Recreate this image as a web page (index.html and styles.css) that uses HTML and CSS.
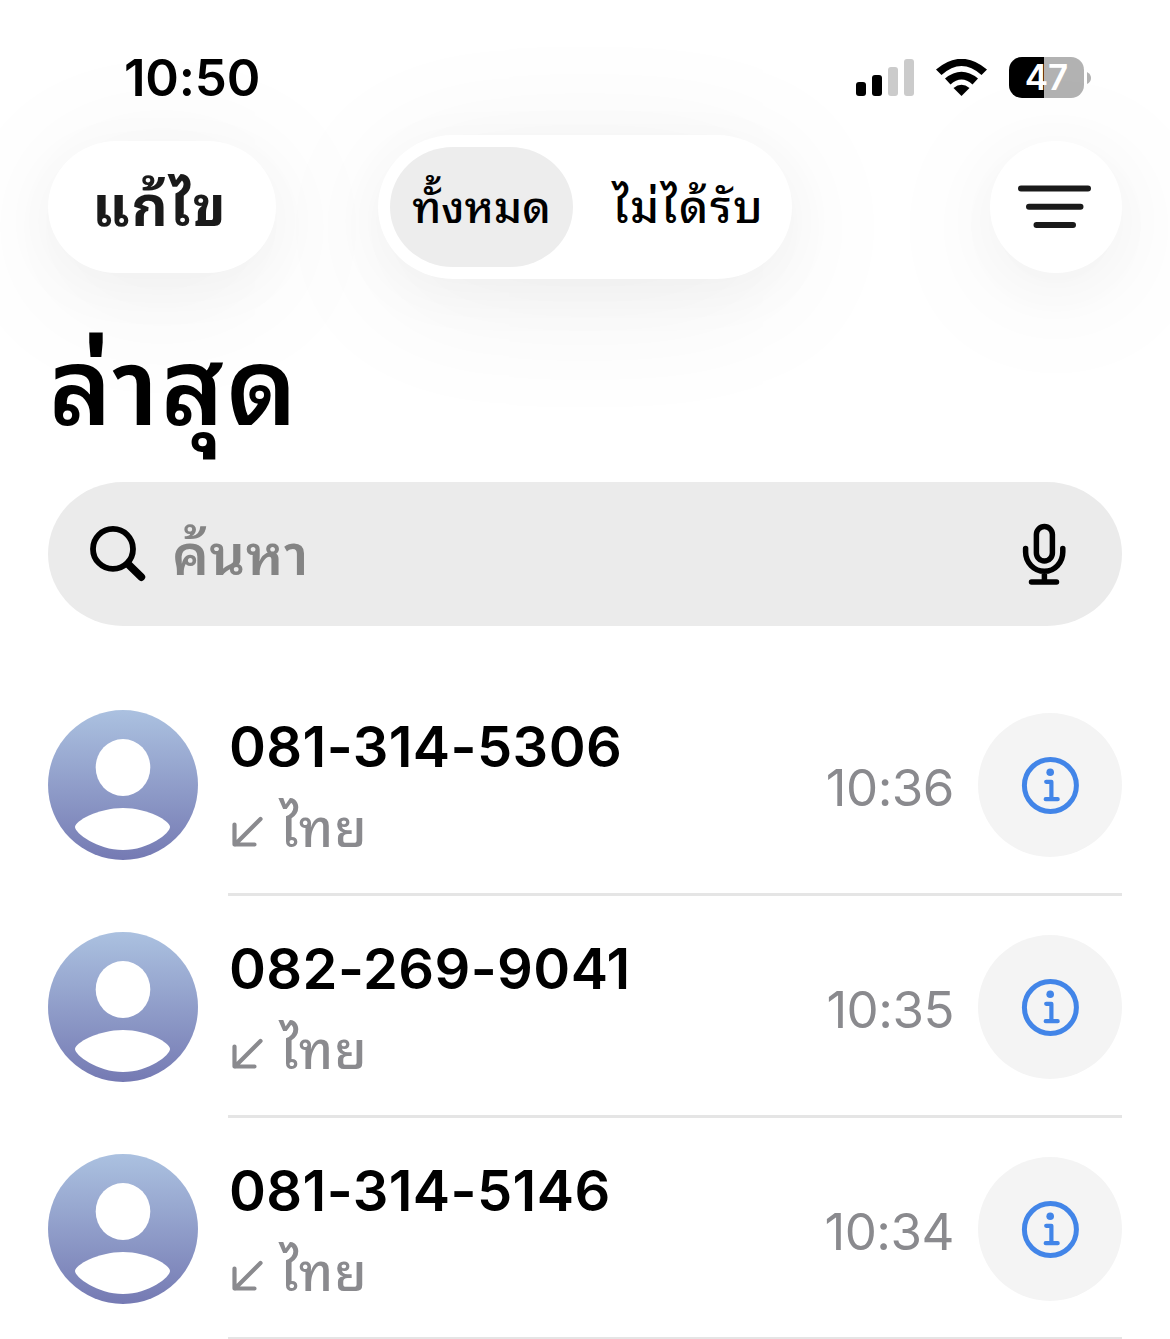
FILE: index.html
```html
<!DOCTYPE html>
<html lang="th">
<head>
	<meta charset="UTF-8">
	<meta name="viewport" content="width=device-width, initial-scale=1.0">
	<title>ล่าสุด</title>
	<link rel="stylesheet" href="styles.css">
</head>
<body>
	<svg class="sprite" width="0" height="0">
		<defs>
			<linearGradient id="avatar-bg" x1="0" y1="0" x2="0" y2="1">
				<stop offset="0" stop-color="#abc1e0"/>
				<stop offset="1" stop-color="#757ab3"/>
			</linearGradient>
		</defs>
		<symbol id="avatar" viewBox="0 0 150 150">
			<circle cx="75" cy="75" r="75" fill="url(#avatar-bg)"/>
			<ellipse cx="75" cy="57.5" rx="27.3" ry="28.5" fill="#fff"/>
			<path d="M27 117C27 111 50 98 75 98s47 13 47 19S101 140 75 140 27 123 27 117z" fill="#fff"/>
		</symbol>
		<symbol id="arrow" viewBox="0 0 32 32">
			<path d="M29.500 3 4 28.500M3.500 8.500V28.500H23.500" fill="none" stroke="#8a8a8e" stroke-width="4.200" stroke-linecap="round" stroke-linejoin="round"/>
		</symbol>
		<symbol id="info" viewBox="0 0 58 58">
			<circle cx="29.400" cy="29.500" r="26" fill="none" stroke="#4285e8" stroke-width="5"/>
			<circle cx="29.200" cy="16.300" r="3.800" fill="#4285e8"/>
			<path d="M25.200 25.800h5.200v17M24.700 43.200h12" fill="none" stroke="#4285e8" stroke-width="4.200" stroke-linecap="round" stroke-linejoin="round"/>
		</symbol>
	</svg>

	<div class="status-bar">
		<span class="clock">10:50</span>
		<div class="status-icons">
			<svg width="58" height="38" viewBox="0 0 58 38">
				<rect x="0" y="23" width="10" height="14" rx="3"/>
				<rect x="16" y="16" width="10" height="21" rx="3"/>
				<rect x="32" y="8" width="10" height="29" rx="3" fill="#cbcbcb"/>
				<rect x="48" y="0" width="10" height="37" rx="3" fill="#cbcbcb"/>
			</svg>
			<svg class="wifi" width="51" height="37" viewBox="0 0 51 37">
				<path d="M0 10.500Q25.500-11 51 10.500L45.500 16Q25.500-2 5.500 16z"/>
				<path d="M9 19.500Q25.500 6 42 19.500L36.500 25.500Q25.500 15.500 14.500 25.500z"/>
				<path d="M17.500 29Q25.500 22.500 33.500 29L25.500 37z"/>
			</svg>
			<div class="battery"><span>47</span></div>
			<svg class="battery-tip" width="4" height="12" viewBox="0 0 4 12"><path d="M0 0Q4 2 4 6T0 12z" fill="#b2b2b2"/></svg>
		</div>
	</div>

	<header class="toolbar">
		<button class="edit-btn">แก้ไข</button>
		<div class="segments">
			<button class="segment active">ทั้งหมด</button>
			<button class="segment wide">ไม่ได้รับ</button>
		</div>
		<button class="filter-btn">
			<svg width="76" height="46" viewBox="0 0 76 46" fill="none" stroke="#1a1a1a" stroke-width="6" stroke-linecap="round">
				<path d="M3 4.500H70M11 22.700H62.500M18.500 41H55"/>
			</svg>
		</button>
	</header>

	<h1>ล่าสุด</h1>

	<div class="search">
		<svg width="56" height="56" viewBox="0 0 56 56" fill="none" stroke="#000" stroke-linecap="round">
			<circle cx="23" cy="22.900" r="20" stroke-width="5.800"/>
			<path d="M38.500 38.500 51.300 51" stroke-width="7.800"/>
		</svg>
		<span class="placeholder">ค้นหา</span>
		<svg class="mic" width="44" height="62" viewBox="0 0 44 62" fill="none" stroke="#000" stroke-width="5.500" stroke-linecap="round">
			<rect x="14.400" y="3.500" width="16" height="34.500" rx="8"/>
			<path d="M3.600 25.500v3.500C3.600 39.500 12 48.300 22.400 48.300s18.400-8.800 18.400-19.300V25.500M22.400 48.300v10.500M9.500 59H34.500"/>
		</svg>
	</div>

	<ul class="calls">
		<li class="call">
			<svg class="avatar"><use href="#avatar"/></svg>
			<div class="call-body">
				<div class="call-text">
					<div class="number">081-314-5306</div>
					<div class="label"><svg class="arrow"><use href="#arrow"/></svg><span>ไทย</span></div>
				</div>
				<span class="time">10:36</span>
				<button class="info-btn"><svg width="58" height="58"><use href="#info"/></svg></button>
			</div>
		</li>
		<li class="call">
			<svg class="avatar"><use href="#avatar"/></svg>
			<div class="call-body">
				<div class="call-text">
					<div class="number">082-269-9041</div>
					<div class="label"><svg class="arrow"><use href="#arrow"/></svg><span>ไทย</span></div>
				</div>
				<span class="time">10:35</span>
				<button class="info-btn"><svg width="58" height="58"><use href="#info"/></svg></button>
			</div>
		</li>
		<li class="call">
			<svg class="avatar"><use href="#avatar"/></svg>
			<div class="call-body">
				<div class="call-text">
					<div class="number">081-314-5146</div>
					<div class="label"><svg class="arrow"><use href="#arrow"/></svg><span>ไทย</span></div>
				</div>
				<span class="time">10:34</span>
				<button class="info-btn"><svg width="58" height="58"><use href="#info"/></svg></button>
			</div>
		</li>
	</ul>
</body>
</html>
```

FILE: styles.css
```css
* {
	box-sizing: border-box;
}

body {
	margin: 0;
	height: 1339px;
	overflow: hidden;
	background: #fff;
	color: #000;
	font-family: Inter, Thonburi, "Noto Sans Thai Looped", Loma, "Noto Sans Thai", "Noto Sans", sans-serif;
}

button {
	border: none;
	padding: 0;
	font-family: inherit;
	color: inherit;
}

svg {
	display: block;
	flex-shrink: 0;
}

.sprite {
	position: absolute;
}

.status-bar {
	height: 135px;
	padding: 48px 79px 0 124px;
	display: flex;
	justify-content: space-between;
	align-items: flex-start;
}

.clock {
	font-size: 51px;
	font-weight: 600;
	line-height: 60px;
	letter-spacing: -0.2px;
}

.status-icons {
	display: flex;
	align-items: center;
	height: 59px;
}

.wifi {
	margin: 0 22px;
}

.battery {
	width: 75px;
	height: 41px;
	border-radius: 13px;
	background: linear-gradient(90deg, #000 35px, #b2b2b2 35px);
	color: #fff;
	font-size: 35px;
	font-weight: 600;
	line-height: 41px;
	text-align: center;
}

.battery-tip {
	margin-left: 3px;
}

.toolbar {
	height: 144px;
	padding: 0 48px;
	display: flex;
	align-items: center;
}

.edit-btn, .segments, .filter-btn {
	background: #fff;
	box-shadow: 0 14px 60px rgba(0, 0, 0, 0.04), 0 20px 150px rgba(0, 0, 0, 0.06);
}

.edit-btn {
	width: 228px;
	height: 132px;
	padding: 0 4px 12px 0;
	border-radius: 69px / 66px;
	color: #1a1a1a;
	font-size: 56px;
	font-weight: 700;
	letter-spacing: 2px;
}

.segments {
	width: 414px;
	height: 144px;
	margin-left: 102px;
	padding: 12px;
	border-radius: 75px / 72px;
	display: flex;
}

.segment {
	flex: 1;
	padding-bottom: 8px;
	background: none;
	font-size: 44px;
	font-weight: 500;
}

.segment.active {
	flex: 0 0 183px;
	background: #ededed;
	border-radius: 63px / 60px;
}

.segment.wide {
	padding-left: 24px;
	font-size: 45px;
	letter-spacing: 1.8px;
}

.filter-btn {
	width: 132px;
	height: 132px;
	margin-left: auto;
	border-radius: 50%;
	display: flex;
	align-items: center;
	justify-content: center;
}

h1 {
	height: 203px;
	margin: 0;
	padding: 43px 0 0 49px;
	font-size: 106px;
	font-weight: 600;
	line-height: 130px;
	letter-spacing: 2.5px;
}

.search {
	height: 144px;
	margin: 0 48px;
	padding: 0 56px 0 42px;
	border-radius: 75px / 72px;
	background: #ebebeb;
	display: flex;
	align-items: center;
}

.placeholder {
	margin: 0 0 9px 26px;
	color: #848484;
	font-size: 56px;
	font-weight: 600;
	letter-spacing: 0.5px;
}

.mic {
	margin-left: auto;
}

.calls {
	list-style: none;
	margin: 48px 0 0;
	padding: 0 48px;
}

.call {
	display: flex;
	gap: 30px;
	height: 222px;
}

.avatar {
	width: 150px;
	height: 150px;
	margin-top: 36px;
}

.call-body {
	flex: 1;
	display: flex;
	border-bottom: 3px solid #e5e5e5;
}

.call-text {
	flex: 1;
	padding: 38px 0 0 1px;
}

.number {
	font-size: 56px;
	font-weight: 600;
	line-height: 71px;
	letter-spacing: 0.4px;
	white-space: nowrap;
}

.label {
	display: flex;
	height: 80px;
	padding-left: 2px;
	color: #8a8a8e;
	font-size: 52px;
	font-weight: 500;
	line-height: 91px;
	letter-spacing: 1px;
}

.arrow {
	width: 32px;
	height: 32px;
	margin: 33px 17px 0 0;
}

.time {
	margin-right: 24px;
	color: #8a8a8e;
	font-size: 51px;
	line-height: 227px;
	letter-spacing: -0.5px;
}

.info-btn {
	width: 144px;
	height: 144px;
	margin-top: 39px;
	border-radius: 50%;
	background: #f4f4f4;
	display: flex;
	align-items: center;
	justify-content: center;
}
```
